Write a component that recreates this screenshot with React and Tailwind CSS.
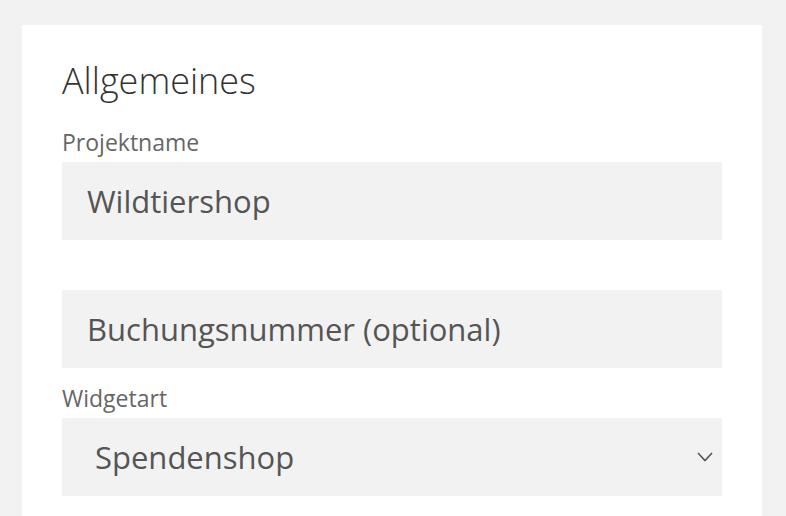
import { useState } from 'react';

const fieldLabel = 'block h-[28px] mt-[16px] mb-[6px] text-[23px] leading-[28px] text-[#666]';
const fieldBox =
  'block w-full h-[78px] bg-[#f2f2f2] px-[25px] text-[31px] text-[#555] placeholder:text-[#555] outline-none';

const Field = ({ label, value, placeholder, first }) => (
  <div>
    <label className={fieldLabel + (first ? ' !mt-[25px]' : '')}>{label}</label>
    <input
      type="text"
      defaultValue={value}
      placeholder={placeholder}
      className={fieldBox}
    />
  </div>
);

const App = () => {
  const [widget, setWidget] = useState('Spendenshop');

  return (
    <div
      className="min-h-screen bg-[#f2f2f2] pl-[22px] pr-[24px] pt-[25px]"
      style={{ fontFamily: '"Open Sans", "Noto Sans", sans-serif' }}
    >
      <div className="bg-white px-[40px] pt-[34px] pb-[60px]">
        <h2 className="text-[36px] leading-[44px] font-light text-[#333]">Allgemeines</h2>

        <Field label="Projektname" value="Wildtiershop" first />
        <Field label="" placeholder="Buchungsnummer (optional)" />

        {/* Widget type */}
        <div>
          <label className={fieldLabel}>Widgetart</label>
          <div className="relative">
            <select
              value={widget}
              onChange={(e) => setWidget(e.target.value)}
              className="block w-full h-[78px] appearance-none bg-[#f2f2f2] pl-[33px] pr-[60px] text-[31px] text-[#555] outline-none rounded-none"
            >
              <option>Spendenshop</option>
              <option>Spendenformular</option>
            </select>
            <svg
              className="pointer-events-none absolute right-[9px] top-[34px] w-[16px] h-[10px]"
              viewBox="0 0 16 10"
              fill="none"
            >
              <polyline points="1,1 8,8.5 15,1" stroke="#555" strokeWidth="1.6" />
            </svg>
          </div>
        </div>
      </div>
    </div>
  );
};

export default App;
